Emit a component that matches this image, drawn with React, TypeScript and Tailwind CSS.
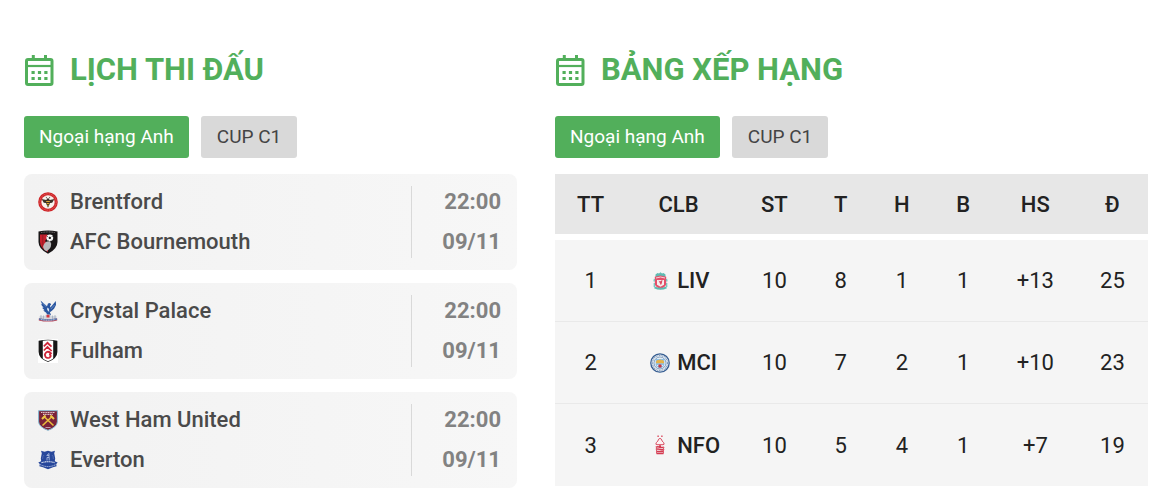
import { useState } from 'react';
import type { ReactNode } from 'react';

function CalendarIcon() {
  return (
    <svg width="30" height="31" viewBox="0 0 30 31" fill="none" className="text-[#52af5b]" aria-hidden="true">
      <rect x="2.5" y="4.5" width="25.500" height="25" rx="1.5" stroke="currentColor" strokeWidth="3" />
      <path d="M2 11h26" stroke="currentColor" strokeWidth="2.2" />
      <path d="M9.300 0v5M21.500 0v5" stroke="currentColor" strokeWidth="3" />
      <path d="M7.500 17.500h16.500M7.500 23.500h16.500" stroke="currentColor" strokeWidth="3.200" strokeDasharray="3.200 3.200" />
    </svg>
  );
}

function BrentfordCrest() {
  return (
    <svg width="20" height="20" viewBox="0 0 20 20" aria-hidden="true">
      <circle cx="10" cy="10" r="9.8" fill="#cf2427" />
      <circle cx="10" cy="10" r="8.2" fill="none" stroke="#e06b6a" strokeWidth="1" strokeDasharray="1 .8" />
      <circle cx="10" cy="10" r="6.7" fill="#f7f3ee" />
      <path d="M3.6 7 8.200 8 10 6l1.800 2 4.600-1-2.200 3.700-2.100.3L10 15.700 7.900 11l-2.100-.3z" fill="#3b3026" />
      <path d="M8.2 9.500h3.6M8.6 11.500h2.8M9.300 13.300h1.400" stroke="#dba52f" strokeWidth="1" />
      <path d="M9 6.500 8 4.800M11 6.500l1-1.700" stroke="#3b3026" strokeWidth=".7" />
    </svg>
  );
}

function BournemouthCrest() {
  return (
    <svg width="20" height="24" viewBox="0 0 20 24" aria-hidden="true">
      <path d="M.5 1.5Q10-.3 19.5 1.5V12q0 7-9.5 11.7Q.5 19 .5 12z" fill="#181516" />
      <path d="M2 4.5h7.5v3L7 11l3 3v8Q2 18 2 12z" fill="#c5202d" />
      <path d="M4.8 4.500v13" stroke="#8d1a24" strokeWidth=".8" />
      <path d="M5 17q1-4.500 4-5.500l3-.3 1.200 2.500q0 3.300-1.800 5.300L8.500 21.300 6.500 20z" fill="#b9b9bd" />
      <circle cx="11.800" cy="7.800" r="3.400" fill="#f8f8f8" />
      <path d="m11.800 6.600 1.300 1-.5 1.500H11l-.5-1.500z" fill="#222" />
      <path d="m9 7 .8-.9M14.700 7l-.8-.9M10.300 10.400l.6.4M13.300 10.400l-.6.4" stroke="#222" strokeWidth=".7" />
      <path d="M3 2.6Q10 1.3 17 2.6" fill="none" stroke="#8d8888" strokeWidth=".9" strokeDasharray="1 .6" />
    </svg>
  );
}

function PalaceCrest() {
  return (
    <svg width="20" height="24" viewBox="0 0 20 24" aria-hidden="true">
      <path d="M2.5 1.5 9 7.2l1-2.7 2-.6 1.2 1.5L12 6.700l.4 1.800L17.800 2l.2 4-1.800 3.600-2 2-2.300 1.700L13 16l-3 1-1.800-3.200-3-2.400 1.400-.2L4 8.700l1.600.1L2.800 5.200l1.400.3z" fill="#2a56a0" />
      <path d="m9.200 8.500 1.800 1.300.2 3.300-2-2z" fill="#dbe4f1" />
      <path d="m4.500 3.800 3.700 4M16.500 6l-3.600 4" stroke="#8ba8d3" strokeWidth=".6" />
      <path d="M1.500 17h5l1.500-1.500h4l1.500 1.500h5v3h-17z" fill="#d3d7de" />
      <path d="M3 16v4M5.500 16.500V20M14.500 16.500V20M17 16v4" stroke="#9aa6b9" strokeWidth=".7" />
      <path d="M8.500 15.800h3v2.700h-3z" fill="#d4343c" />
      <path d="M.8 19.4Q10 21 19.2 19.4v2Q10 23.800.8 21.400z" fill="#b9475a" />
      <path d="M1 19.300Q10 21 19 19.300v1.500Q10 22.800 1 20.800z" fill="#5577b0" />
      <path d="M3 20.6q7 1.200 14 0" fill="none" stroke="#e7ecf4" strokeWidth=".8" strokeDasharray="1 .7" />
    </svg>
  );
}

function FulhamCrest() {
  return (
    <svg width="20" height="24" viewBox="0 0 20 24" aria-hidden="true">
      <path d="M0 0h20v24H0z" fill="#fff" />
      <path d="M.6 1.800Q10-.2 19.400 1.800V13q0 6.500-9.400 10Q.6 19.500.6 13z" fill="#171717" />
      <path d="M4.800 1.800Q10 .5 15.200 1.800v17.700q-2 1.600-5.200 2.700-3.200-1.100-5.200-2.700z" fill="#fff" />
      <path d="M5.800 7.300 9.500 3.800l4 3.900M5.800 11.500 9.500 8l4.200 4M9.500 3.800l2.500 2.600M9.500 8l2.500 2.600M13.600 14.800q-3-3.200-5.400-1.400-2.400 2.200-.4 4.800 3.200 2 4.900-.9.200-1.600-1.700-1.900" fill="none" stroke="#cf2538" strokeWidth="1.700" />
    </svg>
  );
}

function WestHamCrest() {
  return (
    <svg width="20" height="21" viewBox="0 0 20 21" aria-hidden="true">
      <path d="M.6.700h18.800v10.800q0 5.500-9.400 8.800-9.400-3.300-9.400-8.800z" fill="#7b2338" stroke="#83b8d2" strokeWidth="1" />
      <path d="M3 2.500h14M5 4.400h10" stroke="#e1c8cf" strokeWidth="1.100" strokeDasharray="1.200 .5" />
      <path d="m4.500 15.500 9.500-9M15.500 15.500 6 6.500" stroke="#e9bd3c" strokeWidth="1.600" />
      <path d="m4 9 3.500-3.500M16 9l-3.500-3.500" stroke="#edc84a" strokeWidth="2" />
      <path d="M7.500 17.500h5" stroke="#d1a9b4" strokeWidth=".9" />
    </svg>
  );
}

function EvertonCrest() {
  return (
    <svg width="20" height="20" viewBox="0 0 20 20" aria-hidden="true">
      <path d="m3 .8 3.500.9L10 .8l3.500.9L17 .8l-.8 2.500 1 5.200-.4 2.700 2.900 1.200-1.500 1.500.4 2.400-3.600.9-5 2-5-2-3.600-.9.400-2.400-1.500-1.500 2.900-1.200-.4-2.700 1-5.200z" fill="#27479b" />
      <path d="M9 10.500V7.500h2.200v3M8.500 5.500 11 3.500v4M9 5.500h2" fill="none" stroke="#b8c6e5" strokeWidth=".8" />
      <path d="M4.600 9q0-3 1.400-4M15.400 9q0-3-1.400-4" fill="none" stroke="#5570b3" strokeWidth=".8" />
      <path d="M3.500 12.600q6.500-1.800 13 0" fill="none" stroke="#dde4f2" strokeWidth="1.100" strokeDasharray="1.400 .4" />
      <path d="M2 14.500q8 4.200 16 0" fill="none" stroke="#b3c2e2" strokeWidth="1" strokeDasharray="1.200 .6" />
    </svg>
  );
}

function LiverpoolCrest() {
  return (
    <svg width="15" height="18" viewBox="0 0 14 18" aria-hidden="true">
      <path d="M2 2.500 4 1l1.500.5L7 .3l1.500 1.200L10 1l2 1.500V5H2z" fill="#5fbbb2" />
      <path d="M1.300 4.800 7 3.600l5.700 1.200V12q0 2.500-5.700 5.300Q1.300 14.500 1.300 12z" fill="#e4506a" />
      <path d="M2.500 6 7 5l4.500 1" fill="none" stroke="#f7d4d9" strokeWidth="1" />
      <path d="M3.500 8h7v4.800L7 14.700l-3.500-1.900z" fill="#f5eeee" />
      <path d="m5 8.500 1.500 1L9 7.800l-.7 3.400-.9 2-1-2z" fill="#dc4961" />
      <path d="M1 7 .500 9.500M.8 11v4M13 7l.5 2.500M13.200 11v4" fill="none" stroke="#74c5bd" strokeWidth="1.300" />
      <path d="M1 15.300q6 3 12 0" fill="none" stroke="#5fb9b0" strokeWidth="2" />
    </svg>
  );
}

function ManCityCrest() {
  return (
    <svg width="20" height="20" viewBox="0 0 20 20" aria-hidden="true">
      <circle cx="10" cy="10" r="9.200" fill="#f4f7fa" stroke="#365d91" strokeWidth="1.300" />
      <circle cx="10" cy="10" r="7.500" fill="none" stroke="#7a96b8" strokeWidth="1.200" strokeDasharray="1 .7" />
      <circle cx="10" cy="10" r="6" fill="#fff" stroke="#5d80aa" strokeWidth=".8" />
      <path d="M5.500 5.800h9v5.700q0 2.500-4.500 4.300-4.500-1.800-4.500-4.300z" fill="#8fbfe4" />
      <path d="M6 8.500 7.200 7l2 .3.800-1.500.9 1.500 2-.3L14 8.500v1.700H6z" fill="#e5b348" />
      <path d="M7 12.500h6" stroke="#e8f2fa" strokeWidth=".9" />
      <circle cx="10" cy="13" r="1.800" fill="#c53844" />
    </svg>
  );
}

function ForestCrest() {
  return (
    <svg width="10" height="20" viewBox="0 0 10 20" aria-hidden="true">
      <path d="M2.300 1.200H4M6 1.200h1.700" stroke="#e06c7c" strokeWidth="1.400" />
      <path d="M3.600 4.200Q5 2.600 6.400 4.200q.4 2 2.300 3.500 1.200 2-.6 2H1.900q-1.800 0-.6-2 1.900-1.500 2.300-3.500z" fill="#fdf1f2" stroke="#d94c61" strokeWidth="1" />
      <path d="M4 10.200h2v2H4z" fill="#d43b51" />
      <path d="M.8 12.200q2-.8 4.200 0t4.200 0M.8 14.400q2-.8 4.200 0t4.200 0M1.200 16.500h7.600M1.500 18.500h7" fill="none" stroke="#d43b51" strokeWidth="1.500" />
      <path d="M1.500 12v6.500M8.500 12v6.500" stroke="#dc5a6c" strokeWidth="1" />
    </svg>
  );
}

const fixtures = [
  {
    home: { name: 'Brentford', crest: <BrentfordCrest /> },
    away: { name: 'AFC Bournemouth', crest: <BournemouthCrest /> },
    time: '22:00',
    date: '09/11',
  },
  {
    home: { name: 'Crystal Palace', crest: <PalaceCrest /> },
    away: { name: 'Fulham', crest: <FulhamCrest /> },
    time: '22:00',
    date: '09/11',
  },
  {
    home: { name: 'West Ham United', crest: <WestHamCrest /> },
    away: { name: 'Everton', crest: <EvertonCrest /> },
    time: '22:00',
    date: '09/11',
  },
];

const standings = [
  { club: 'LIV', crest: <LiverpoolCrest />, stats: ['10', '8', '1', '1', '+13', '25'] },
  { club: 'MCI', crest: <ManCityCrest />, stats: ['10', '7', '2', '1', '+10', '23'] },
  { club: 'NFO', crest: <ForestCrest />, stats: ['10', '5', '4', '1', '+7', '19'] },
];

const leagues = ['Ngoại hạng Anh', 'CUP C1'];

function Panel({ title, children }: { title: string; children: ReactNode }) {
  const [active, setActive] = useState(leagues[0]);

  return (
    <section className="min-w-0">
      <h2 className="flex h-10 items-center gap-4 text-[31px] font-bold text-[#52af5b]">
        <CalendarIcon />
        {title}
      </h2>
      <div className="mt-[26px] mb-4 flex gap-3">
        {leagues.map((league) => (
          <button
            key={league}
            type="button"
            onClick={() => setActive(league)}
            className={`h-[42px] rounded-[3px] text-[19px] ${
              league === active ? 'bg-[#52af5b] px-[15px] text-white' : 'bg-[#d9d9d9] px-4 text-[#444]'
            }`}
          >
            {league}
          </button>
        ))}
      </div>
      {children}
    </section>
  );
}

function Team({ name, crest }: { name: string; crest: ReactNode }) {
  return (
    <div className="flex items-center gap-3 leading-10">
      <span className="flex w-5 justify-center">{crest}</span>
      {name}
    </div>
  );
}

export default function App() {
  return (
    <main className="grid grid-cols-[493fr_593fr] gap-[38px] bg-white pt-[50px] pr-[11px] pb-[3px] pl-6 font-[Roboto,sans-serif]">
      <Panel title="LỊCH THI ĐẤU">
        <ul className="flex flex-col gap-[13px]">
          {fixtures.map((match) => (
            <li
              key={match.home.name}
              className="flex rounded-lg bg-linear-to-r from-[#f2f2f2] to-[#f7f7f7] pr-4 pl-[14px] text-[22px] font-medium text-[#4a4a4a]"
            >
              <div className="flex-1 py-2">
                <Team {...match.home} />
                <Team {...match.away} />
              </div>
              <div className="my-3 w-[90px] border-l border-[#d9d9d9] text-right font-bold text-[#828282]">
                <div className="-my-1 leading-10">
                  <div>{match.time}</div>
                  <div>{match.date}</div>
                </div>
              </div>
            </li>
          ))}
        </ul>
      </Panel>

      <Panel title="BẢNG XẾP HẠNG">
        <table className="w-full table-fixed border-separate border-spacing-0 text-center text-[22px] text-[#222]">
          <colgroup>
            <col className="w-[12%]" />
            <col className="w-[19%]" />
            <col className="w-[12%]" />
            <col />
            <col />
            <col />
            <col className="w-[14%]" />
            <col className="w-[12%]" />
          </colgroup>
          <thead>
            <tr className="h-[66px] bg-[#e7e7e7]">
              {['TT', 'CLB', 'ST', 'T', 'H', 'B', 'HS', 'Đ'].map((label) => (
                <th
                  key={label}
                  scope="col"
                  className={`border-b-6 border-white font-medium ${label === 'CLB' ? 'pr-2' : ''}`}
                >
                  {label}
                </th>
              ))}
            </tr>
          </thead>
          <tbody className="[&_td]:border-b [&_td]:border-[#e9e9e9] [&>tr:last-child>td]:border-b-0">
            {standings.map((row, index) => (
              <tr key={row.club} className="h-[82px] bg-[#f5f5f5]">
                <td>{index + 1}</td>
                <td className="font-medium">
                  <div className="flex items-center gap-[7px] pl-6">
                    <span className="flex w-5 justify-center">{row.crest}</span>
                    {row.club}
                  </div>
                </td>
                {row.stats.map((stat, i) => (
                  <td key={i}>{stat}</td>
                ))}
              </tr>
            ))}
          </tbody>
        </table>
      </Panel>
    </main>
  );
}
